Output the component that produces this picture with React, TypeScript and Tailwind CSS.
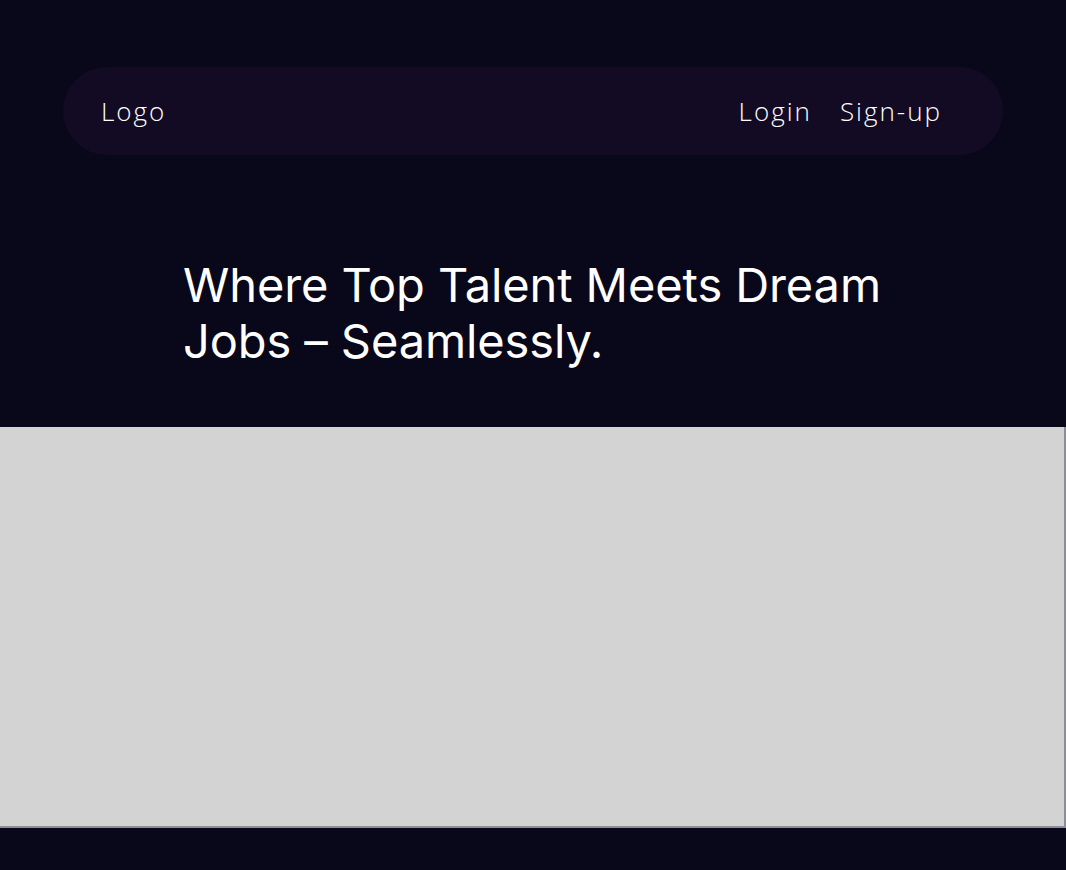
export default function App() {
  return (
    <div className="min-h-[870px] bg-[#09071a] pt-[67px] pb-[43px]">
      <nav className="mx-[63px] flex h-[88px] items-center justify-between rounded-full bg-[#130b24] pl-[38px] pr-[61px] font-['Open_Sans',sans-serif] text-[26px] font-light tracking-[2px] text-white">
        <a href="#">Logo</a>
        <div className="flex items-center gap-[28px]">
          <a href="#">Login</a>
          <a href="#">Sign-up</a>
        </div>
      </nav>

      <section className="pt-[102px] pb-[58px] pl-[183px]">
        <h1 className="max-w-[740px] font-['Inter',sans-serif] text-[47px] leading-[56px] font-normal tracking-[-0.1px] text-white">
          Where Top Talent Meets Dream Jobs – Seamlessly.
        </h1>
      </section>

      <div className="h-[401px] w-full border-r-2 border-b-2 border-[#8d8d96] bg-[#d3d3d3]" />
    </div>
  );
}
